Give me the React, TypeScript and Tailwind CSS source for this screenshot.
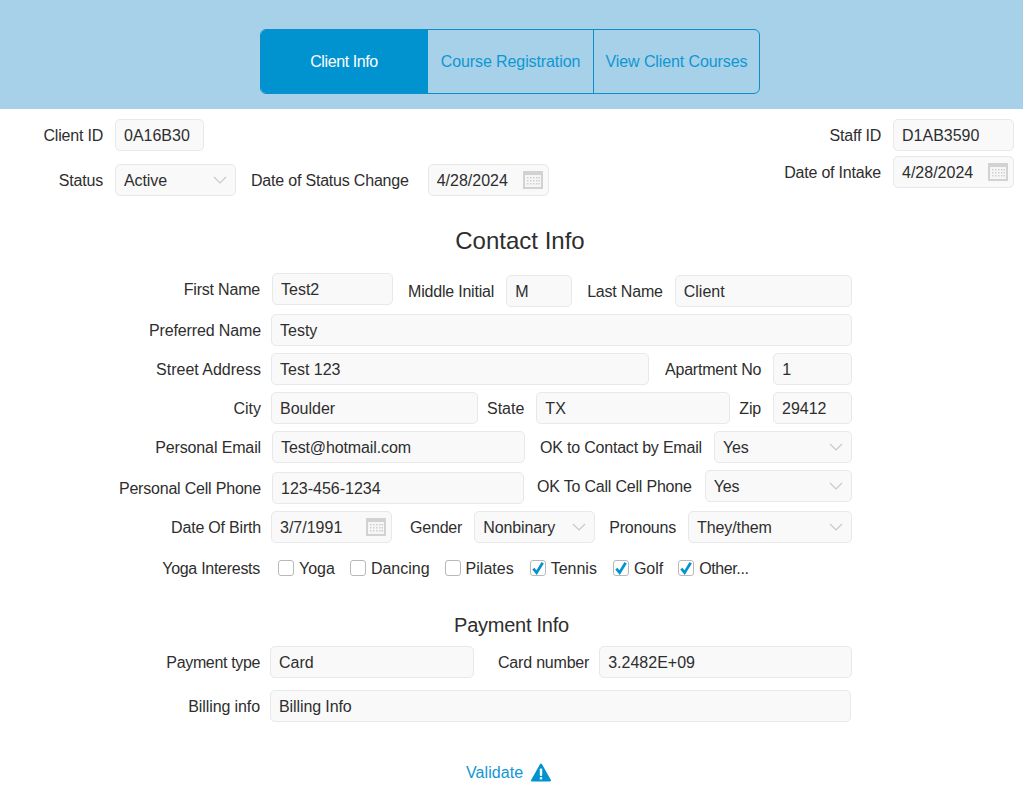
import React from 'react';

const Label: React.FC<{ text: string; className?: string }> = ({ text, className }) => (
  <label className={`shrink-0 whitespace-nowrap pt-[2px] text-[16px] leading-[18px] tracking-[-0.2px] text-[#2e2e2e] ${className ?? ''}`}>{text}</label>
);

const Field: React.FC<{ value: string; className?: string }> = ({ value, className }) => (
  <input
    readOnly
    value={value}
    className={`h-8 shrink-0 rounded-[5px] border border-[#e8e8e8] bg-[#f9f9f9] px-2 pt-[2px] text-[16px] text-[#2e2e2e] outline-none ${className ?? ''}`}
  />
);

const Select: React.FC<{ value: string; className?: string }> = ({ value, className }) => (
  <div className={`flex h-8 shrink-0 items-center justify-between rounded-[5px] border border-[#e8e8e8] bg-[#f9f9f9] pl-2 pr-[8px] text-[16px] text-[#2e2e2e] ${className ?? ''}`}>
    <span className="pt-[2px] tracking-[-0.1px]">{value}</span>
    <svg width="14" height="8" viewBox="0 0 14 8" fill="none" stroke="#c9c9c9" strokeWidth="1.2">
      <path d="M1 1l6 6 6-6" />
    </svg>
  </div>
);

const DateField: React.FC<{ value: string; className?: string }> = ({ value, className }) => (
  <div className={`flex h-8 shrink-0 items-center justify-between rounded-[5px] border border-[#e8e8e8] bg-[#f9f9f9] pl-2 pr-[5px] text-[16px] text-[#2e2e2e] ${className ?? ''}`}>
    <span className="pt-[2px]">{value}</span>
    <svg width="20" height="18" viewBox="0 0 20 18">
      <rect x="0" y="0" width="20" height="18" fill="#d2d2d2" />
      <rect x="2" y="4" width="16" height="12" fill="#f6f6f6" />
      <g fill="#d0d0d0">
        {[4, 7, 10, 13, 15.5].map((x) =>
          [6, 9, 12].map((y) => <rect key={`${x}-${y}`} x={x} y={y} width="1.5" height="1.5" />)
        )}
      </g>
    </svg>
  </div>
);

const Check: React.FC<{ text: string; checked?: boolean; className?: string }> = ({ text, checked, className }) => (
  <div className={`flex shrink-0 items-center ${className ?? ''}`}>
    <span className="flex h-4 w-4 items-center justify-center rounded-[3px] border border-[#b8b8b8] bg-white">
      {checked && (
        <svg width="14" height="14" viewBox="0 0 12 12" fill="none" stroke="#0093d0" strokeWidth="2.3">
          <path d="M2 6.5l2.8 3.5L10 1.5" />
        </svg>
      )}
    </span>
    <span className="ml-[5px] pt-[2px] text-[16px] leading-[18px] text-[#2e2e2e]">{text}</span>
  </div>
);

const tabClass = 'flex h-full items-center justify-center text-[16px] tracking-[-0.1px] text-[#0f97d3]';

export default function App() {
  return (
    <div className="min-h-[809px] bg-white font-['Liberation_Sans',Arial,sans-serif]">
      <header className="flex h-[109px] justify-center bg-[#a6d1e8] pt-[29px]">
        <nav className="ml-[-3px] flex h-[65px] w-[500px] overflow-hidden rounded-[6px] border border-[#0f8ec9]">
          <div className={`${tabClass} w-[167px] bg-[#0093d0] pr-[1px] tracking-[-0.4px] text-white`}>Client Info</div>
          <div className={`${tabClass} w-[166px] border-r border-[#0f8ec9]`}>Course Registration</div>
          <div className={`${tabClass} flex-1`}>View Client Courses</div>
        </nav>
      </header>

      <section className="flex justify-between pr-[9px] pt-[10px]">
        <div>
          <div className="flex items-center">
            <Label text="Client ID" className="w-[103px] text-right" />
            <Field value="0A16B30" className="ml-3 w-[89px]" />
          </div>
          <div className="mt-[13px] flex items-center">
            <Label text="Status" className="w-[103px] text-right" />
            <Select value="Active" className="ml-3 w-[121px]" />
            <Label text="Date of Status Change" className="ml-[15px]" />
            <DateField value="4/28/2024" className="ml-[19px] w-[121px]" />
          </div>
        </div>
        <div>
          <div className="flex items-center justify-end">
            <Label text="Staff ID" />
            <Field value="D1AB3590" className="ml-3 w-[121px]" />
          </div>
          <div className="mt-[5px] flex items-center justify-end">
            <Label text="Date of Intake" />
            <DateField value="4/28/2024" className="ml-3 w-[121px]" />
          </div>
        </div>
      </section>

      <h2 className="ml-[17px] mt-[31px] text-center text-[24px] leading-[28px] text-[#2e2e2e]">Contact Info</h2>

      <section className="mt-[18px] w-[852px]">
        <div className="flex h-[34px] items-start">
          <Label text="First Name" className="mt-[6px] w-[260px] text-right" />
          <Field value="Test2" className="ml-3 w-[121px]" />
          <Label text="Middle Initial" className="ml-[15px] mt-[8px]" />
          <Field value="M" className="ml-3 mt-[2px] w-[66px]" />
          <Label text="Last Name" className="ml-[15px] mt-[8px]" />
          <Field value="Client" className="ml-3 mt-[2px] w-[177px]" />
        </div>
        <div className="mt-[7px] flex items-center">
          <Label text="Preferred Name" className="w-[261px] text-right tracking-[-0.13px]!" />
          <Field value="Testy" className="ml-[10px] w-[581px]" />
        </div>
        <div className="mt-[7px] flex items-center">
          <Label text="Street Address" className="w-[261px] text-right tracking-[0px]!" />
          <Field value="Test 123" className="ml-[10px] w-[378px]" />
          <Label text="Apartment No" className="ml-4" />
          <Field value="1" className="ml-3 w-[79px]" />
        </div>
        <div className="mt-[7px] flex items-center">
          <Label text="City" className="w-[261px] text-right tracking-[0px]!" />
          <Field value="Boulder" className="ml-[10px] w-[207px]" />
          <Label text="State" className="ml-[9px] tracking-[0px]!" />
          <Field value="TX" className="ml-3 w-[194px]" />
          <Label text="Zip" className="ml-[9px]" />
          <Field value="29412" className="ml-3 w-[79px]" />
        </div>
        <div className="mt-[7px] flex items-center">
          <Label text="Personal Email" className="w-[261px] text-right tracking-[-0.13px]!" />
          <Field value="Test@hotmail.com" className="ml-[11px] w-[253px] tracking-[-0.12px]" />
          <Label text="OK to Contact by Email" className="ml-[15px]" />
          <Select value="Yes" className="ml-3 w-[138px]" />
        </div>
        <div className="mt-[7px] flex h-[34px] items-start">
          <Label text="Personal Cell Phone" className="mt-[8px] w-[261px] text-right" />
          <Field value="123-456-1234" className="ml-[11px] mt-[2px] w-[252px]" />
          <Label text="OK To Call Cell Phone" className="ml-[13px] mt-[6px]" />
          <Select value="Yes" className="ml-[13px] w-[147px]" />
        </div>
        <div className="mt-[7px] flex items-center">
          <Label text="Date Of Birth" className="w-[261px] text-right" />
          <DateField value="3/7/1991" className="ml-[10px] w-[121px]" />
          <Label text="Gender" className="ml-[18px]" />
          <Select value="Nonbinary" className="ml-3 w-[121px]" />
          <Label text="Pronouns" className="ml-[14px]" />
          <Select value="They/them" className="ml-3 w-[164px]" />
        </div>
        <div className="mt-[15px] flex items-center">
          <Label text="Yoga Interests" className="w-[260px] text-right tracking-[-0.28px]!" />
          <Check text="Yoga" className="ml-[18px]" />
          <Check text="Dancing" className="ml-[15px]" />
          <Check text="Pilates" className="ml-[15px]" />
          <Check text="Tennis" checked className="ml-[16px]" />
          <Check text="Golf" checked className="ml-[16px]" />
          <Check text="Other..." checked className="ml-[15px] tracking-[-0.4px]" />
        </div>
      </section>

      <h3 className="mt-[35px] w-[1023px] text-center text-[20px] leading-[24px] tracking-[-0.25px] text-[#2e2e2e]">Payment Info</h3>

      <section className="mt-[9px] w-[852px]">
        <div className="flex items-center">
          <Label text="Payment type" className="w-[260px] text-right tracking-[-0.35px]!" />
          <Field value="Card" className="ml-[10px] w-[204px]" />
          <Label text="Card number" className="ml-6" />
          <Field value="3.2482E+09" className="ml-[10px] w-[253px]" />
        </div>
        <div className="mt-3 flex items-center">
          <Label text="Billing info" className="w-[260px] text-right tracking-[-0.1px]!" />
          <Field value="Billing Info" className="ml-[10px] w-[581px] tracking-[-0.1px]" />
        </div>
      </section>

      <footer className="ml-[466px] mt-[41px] flex items-center">
        <a className="pt-[0px] text-[16px] leading-[18px] tracking-[0.08px] text-[#0f97d3]">Validate</a>
        <svg className="ml-2" width="20" height="19" viewBox="0 0 20 19">
          <path
            fill="#0093d0"
            stroke="#0093d0"
            strokeWidth="2"
            strokeLinejoin="round"
            d="M10 1.5L19 17.5H1z"
          />
          <rect x="8.8" y="5.5" width="2.4" height="7.5" rx="0.8" fill="#fff" />
          <rect x="8.8" y="14.2" width="2.4" height="2.2" fill="#fff" />
        </svg>
      </footer>
    </div>
  );
}
